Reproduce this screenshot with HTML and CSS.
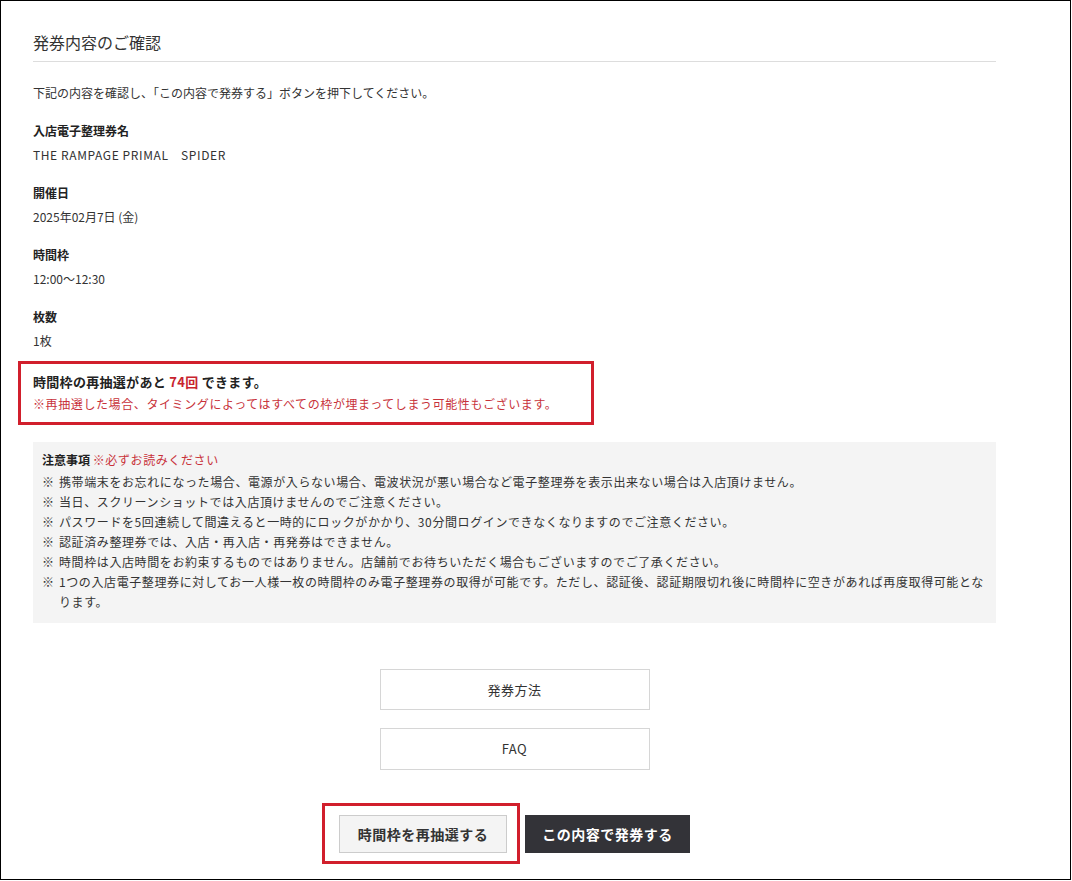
FILE: index.html
```html
<!DOCTYPE html>
<html lang="ja">
<head>
  <meta charset="UTF-8">
  <meta name="viewport" content="width=device-width, initial-scale=1.0">
  <title>発券内容のご確認</title>
  <link rel="stylesheet" href="styles.css">
</head>
<body>
  <div class="frame">
    <div class="content">
      <!-- Heading -->
      <h1 class="page-title">発券内容のご確認</h1>
      <p class="lead">下記の内容を確認し、「この内容で発券する」ボタンを押下してください。</p>

      <!-- Ticket details -->
      <dl class="details">
        <div class="detail">
          <dt>入店電子整理券名</dt>
          <dd class="ticket-name">THE RAMPAGE PRIMAL　SPIDER</dd>
        </div>
        <div class="detail">
          <dt>開催日</dt>
          <dd>2025年02月7日 (金)</dd>
        </div>
        <div class="detail">
          <dt>時間枠</dt>
          <dd>12:00～12:30</dd>
        </div>
        <div class="detail">
          <dt>枚数</dt>
          <dd>1枚</dd>
        </div>
      </dl>

      <!-- Redraw info -->
      <div class="redraw marked">
        <p class="redraw-count">時間枠の再抽選があと <span class="red">74回</span> できます。</p>
        <p class="redraw-note">※再抽選した場合、タイミングによってはすべての枠が埋まってしまう可能性もございます。</p>
      </div>

      <!-- Notes -->
      <div class="notes">
        <p class="notes-title">注意事項 <span class="notes-sub">※必ずお読みください</span></p>
        <ul class="notes-list">
          <li><span class="mark">※</span><span>携帯端末をお忘れになった場合、電源が入らない場合、電波状況が悪い場合など電子整理券を表示出来ない場合は入店頂けません。</span></li>
          <li><span class="mark">※</span><span>当日、スクリーンショットでは入店頂けませんのでご注意ください。</span></li>
          <li><span class="mark">※</span><span>パスワードを5回連続して間違えると一時的にロックがかかり、30分間ログインできなくなりますのでご注意ください。</span></li>
          <li><span class="mark">※</span><span>認証済み整理券では、入店・再入店・再発券はできません。</span></li>
          <li><span class="mark">※</span><span>時間枠は入店時間をお約束するものではありません。店舗前でお待ちいただく場合もございますのでご了承ください。</span></li>
          <li><span class="mark">※</span><span>1つの入店電子整理券に対してお一人様一枚の時間枠のみ電子整理券の取得が可能です。ただし、認証後、認証期限切れ後に時間枠に空きがあれば再度取得可能となります。</span></li>
        </ul>
      </div>

      <!-- Links -->
      <div class="links">
        <a href="#" class="link-btn">発券方法</a>
        <a href="#" class="link-btn">FAQ</a>
      </div>

      <!-- Actions -->
      <div class="actions">
        <div class="action-wrap marked-btn">
          <button class="btn btn-light">時間枠を再抽選する</button>
        </div>
        <button class="btn btn-dark">この内容で発券する</button>
      </div>
    </div>
  </div>
</body>
</html>
```

FILE: styles.css
```css
/* Global */
* {
  box-sizing: border-box;
}
body {
  margin: 0;
  background: #ffffff;
  font-family: "Noto Sans CJK JP", "Noto Sans", sans-serif;
  color: #333333;
}
p, h1, ul, dl, dd {
  margin: 0;
  padding: 0;
}

/* Frame */
.frame {
  width: 1071px;
  height: 880px;
  border: 1px solid #000000;
  overflow: hidden;
}
.content {
  width: 963px;
  margin-left: 32px;
  padding-top: 28px;
}

/* Heading */
.page-title {
  font-size: 16px;
  font-weight: normal;
  line-height: 26px;
  color: #333333;
  padding-bottom: 6px;
  border-bottom: 1px solid #dddddd;
}
.lead {
  font-size: 12px;
  line-height: 20px;
  margin-top: 21px;
}

/* Details */
.details {
  margin: 0;
}
.detail {
  margin-top: 18px;
}
.detail dt {
  font-size: 12px;
  font-weight: bold;
  line-height: 20px;
  color: #222222;
}
.detail dd {
  font-size: 12px;
  line-height: 20px;
  margin-top: 4px;
}
.detail .ticket-name {
  letter-spacing: 0.6px;
}

/* Redraw */
.redraw {
  margin-top: 21px;
}
.redraw-count {
  font-size: 13px;
  font-weight: bold;
  line-height: 20px;
  color: #222222;
  letter-spacing: 0.3px;
}
.redraw-count .red {
  color: #c8232e;
}
.redraw-note {
  font-size: 12px;
  line-height: 20px;
  margin-top: 2px;
  color: #c8323a;
  letter-spacing: 0.6px;
}

/* annotation boxes drawn over the content */
.marked {
  position: relative;
}
.marked::after {
  content: "";
  position: absolute;
  left: -15px;
  top: -11px;
  bottom: -11px;
  width: 570px;
  border: 3px solid #d11f2c;
}
.marked-btn {
  position: relative;
}
.marked-btn::after {
  content: "";
  position: absolute;
  left: -17px;
  right: -13px;
  top: -12px;
  bottom: -11px;
  border: 3px solid #d11f2c;
}

/* Notes */
.notes {
  margin-top: 28px;
  background: #f4f4f4;
  padding: 5px 9px 11px;
}
.notes-title {
  font-size: 12px;
  font-weight: bold;
  line-height: 25px;
  color: #222222;
}
.notes-sub {
  font-weight: normal;
  color: #c8323a;
  letter-spacing: 0.6px;
}
.notes-list {
  list-style: none;
  font-size: 12px;
  line-height: 20px;
  letter-spacing: 0.6px;
  color: #333333;
}
.notes-list li {
  display: flex;
}
.notes-list .mark {
  flex: none;
  width: 17px;
  letter-spacing: 0;
}

/* Links */
.links {
  display: flex;
  flex-direction: column;
  align-items: center;
  gap: 18px;
  margin-top: 46px;
}
.link-btn {
  display: block;
  width: 270px;
  height: 41px;
  line-height: 39px;
  border: 1px solid #d6d6d6;
  text-align: center;
  font-size: 13px;
  color: #333333;
  text-decoration: none;
  letter-spacing: 0.5px;
}
.links .link-btn:last-child {
  height: 42px;
  line-height: 40px;
}

/* Actions */
.actions {
  display: flex;
  justify-content: center;
  gap: 18px;
  margin-top: 45px;
}
.btn {
  height: 38px;
  font-family: inherit;
  font-size: 14px;
  font-weight: bold;
  letter-spacing: 0.5px;
  cursor: pointer;
}
.btn-light {
  width: 168px;
  background: #f4f4f4;
  border: 1px solid #cccccc;
  color: #333333;
}
.btn-dark {
  width: 165px;
  background: #333338;
  border: none;
  color: #ffffff;
}
```
